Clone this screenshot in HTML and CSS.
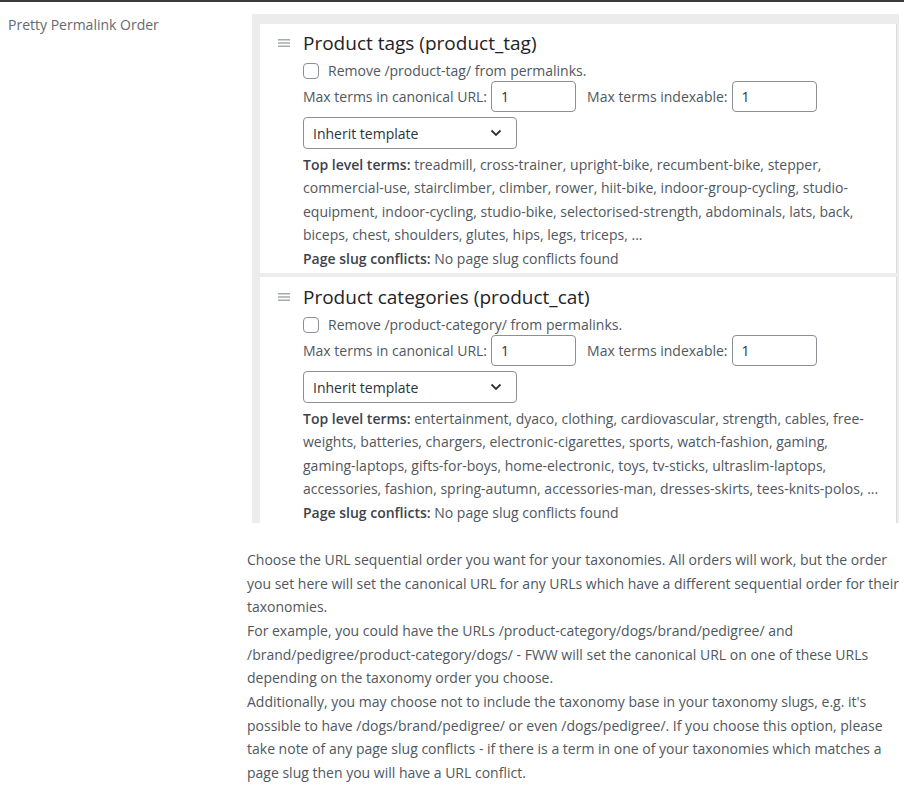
FILE: index.html
```html
<!DOCTYPE html>
<html>
<head>
<meta charset="utf-8">
<link rel="stylesheet" href="styles.css">
</head>
<body>
<div class="topbar"></div>
<div class="row">
  <div class="label">Pretty Permalink Order</div>
  <div class="field">
    <div class="sortbox">
      <div class="card">
        <span class="handle"><svg width="12" height="8" viewBox="0 0 12 8"><path d="M0 0.75H12M0 4H12M0 7.25H12" stroke="#a7aaad" stroke-width="1.4"/></svg></span>
        <div class="content">
          <h3 class="title">Product tags (product_tag)</h3>
          <label class="check"><span class="box"></span>Remove /product-tag/ from permalinks.</label>
          <div class="inputs">
            <span>Max terms in canonical URL:</span><span class="input">1</span>
            <span class="sp">Max terms indexable:</span><span class="input">1</span>
          </div>
          <div class="select">Inherit template<svg class="chev" width="12" height="8" viewBox="0 0 12 8"><path d="M1.5 1.5L6 6L10.5 1.5" fill="none" stroke="#2c3338" stroke-width="1.8"/></svg></div>
          <p class="terms"><b>Top level terms:</b> treadmill, cross-trainer, upright-bike, recumbent-bike, stepper, commercial-use, stairclimber, climber, rower, hiit-bike, indoor-group-cycling, studio-equipment, indoor-cycling, studio-bike, selectorised-strength, abdominals, lats, back, biceps, chest, shoulders, glutes, hips, legs, triceps, ...</p>
          <p class="slug"><b>Page slug conflicts:</b> No page slug conflicts found</p>
        </div>
      </div>
      <div class="card">
        <span class="handle"><svg width="12" height="8" viewBox="0 0 12 8"><path d="M0 0.75H12M0 4H12M0 7.25H12" stroke="#a7aaad" stroke-width="1.4"/></svg></span>
        <div class="content">
          <h3 class="title">Product categories (product_cat)</h3>
          <label class="check"><span class="box"></span>Remove /product-category/ from permalinks.</label>
          <div class="inputs">
            <span>Max terms in canonical URL:</span><span class="input">1</span>
            <span class="sp">Max terms indexable:</span><span class="input">1</span>
          </div>
          <div class="select">Inherit template<svg class="chev" width="12" height="8" viewBox="0 0 12 8"><path d="M1.5 1.5L6 6L10.5 1.5" fill="none" stroke="#2c3338" stroke-width="1.8"/></svg></div>
          <p class="terms"><b>Top level terms:</b> entertainment, dyaco, clothing, cardiovascular, strength, cables, free-weights, batteries, chargers, electronic-cigarettes, sports, watch-fashion, gaming, gaming-laptops, gifts-for-boys, home-electronic, toys, tv-sticks, ultraslim-laptops, accessories, fashion, spring-autumn, accessories-man, dresses-skirts, tees-knits-polos, ...</p>
          <p class="slug"><b>Page slug conflicts:</b> No page slug conflicts found</p>
        </div>
      </div>
    </div>
    <div class="desc">
      <p>Choose the URL sequential order you want for your taxonomies. All orders will work, but the order you set here will set the canonical URL for any URLs which have a different sequential order for their taxonomies.</p>
      <p>For example, you could have the URLs /product-category/dogs/brand/pedigree/ and /brand/pedigree/product-category/dogs/ - FWW will set the canonical URL on one of these URLs depending on the taxonomy order you choose.</p>
      <p>Additionally, you may choose not to include the taxonomy base in your taxonomy slugs, e.g. it's possible to have /dogs/brand/pedigree/ or even /dogs/pedigree/. If you choose this option, please take note of any page slug conflicts - if there is a term in one of your taxonomies which matches a page slug then you will have a URL conflict.</p>
    </div>
  </div>
</div>
</body>
</html>
```
FILE: styles.css
```css
html, body {
  margin: 0;
  padding: 0;
  background: #fff;
}
body {
  font-family: "Open Sans", "Noto Sans", sans-serif;
  font-size: 14px;
  color: #50575e;
}
.topbar {
  height: 2px;
  background: #3c3c3c;
}
.row {
  display: grid;
  grid-template-columns: 239px 1fr;
  padding-left: 8px;
}
.label {
  padding-top: 13px;
  line-height: 20px;
  font-size: 14px;
  color: #646970;
}
.field {
  padding-top: 12px;
  min-width: 0;
}
.sortbox {
  margin-left: 5px;
  width: 647px;
  height: 509px;
  box-sizing: border-box;
  overflow: hidden;
  background: #ececec;
  padding: 10px 2px 0 8px;
}
.card {
  background: #fff;
  display: grid;
  grid-template-columns: 25px 1fr;
  padding: 6px 17px 3px 18px;
  margin-bottom: 4px;
  border-right: 1px solid #dcdcde;
}
.card + .card {
  padding-top: 7px;
}
.handle {
  padding-top: 9px;
  line-height: 0;
}
.content {
  min-width: 0;
}
.title {
  margin: 0;
  font-size: 19px;
  font-weight: 400;
  line-height: 26px;
  color: #1d2327;
}
.check {
  display: flex;
  align-items: center;
  gap: 9px;
  margin-top: 5px;
  height: 20px;
  line-height: 20px;
}
.box {
  width: 16px;
  height: 16px;
  box-sizing: border-box;
  border: 1px solid #8c8f94;
  border-radius: 4px;
  background: #fff;
}
.inputs {
  display: flex;
  align-items: center;
  height: 31px;
}
.input {
  width: 85px;
  height: 31px;
  box-sizing: border-box;
  border: 1px solid #8c8f94;
  border-radius: 4px;
  margin-left: 4px;
  padding-left: 9px;
  line-height: 29px;
  color: #2c3338;
}
.sp {
  margin-left: 11px;
}
.select {
  margin-top: 5px;
  width: 214px;
  height: 32px;
  box-sizing: border-box;
  border: 1px solid #8c8f94;
  border-radius: 4px;
  padding: 0 14px 0 9px;
  display: flex;
  align-items: center;
  justify-content: space-between;
  color: #2c3338;
}
.terms, .slug {
  margin: 0;
  line-height: 23.4px;
}
.terms {
  margin-top: 4px;
}
.terms b, .slug b {
  font-weight: 600;
  color: #3c434a;
}
.desc {
  padding-top: 25px;
  padding-right: 4px;
}
.desc p {
  margin: 0 0 0.5px;
  line-height: 23.5px;
}
```
